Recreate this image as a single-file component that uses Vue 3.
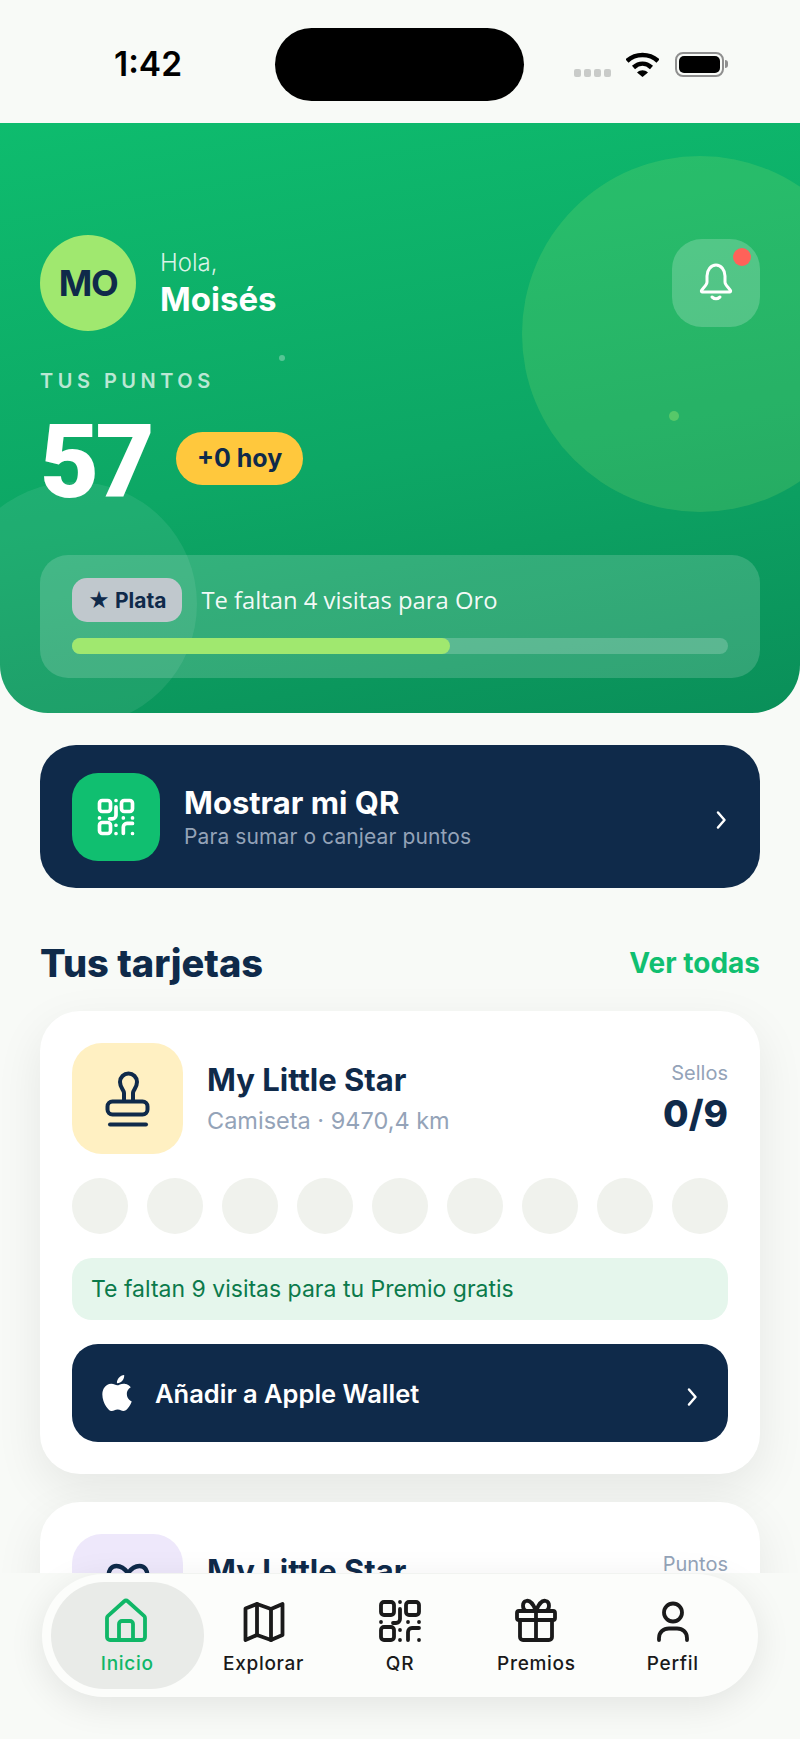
<script setup>
const stamps = Array.from({ length: 9 }, (_, i) => i);
</script>

<template>
  <div class="page">
    <div class="status">
      <span class="time">1:42</span>
      <div class="island"></div>
      <div class="status-right">
        <div class="signal"><i></i><i></i><i></i><i></i></div>
        <svg class="wifi" width="33" height="25" viewBox="0 0 33 25">
          <path d="M1 9C9.500 1 23.500 1 32 9" fill="none" stroke="#000" stroke-width="4.500" />
          <path d="M7.500 15.500C13 10.500 20 10.500 25.500 15.500" fill="none" stroke="#000" stroke-width="4.500" />
          <path d="M11 20.500C14.500 17.500 18.500 17.500 22 20.500L16.500 25Z" fill="#000" />
        </svg>
        <div class="battery"><div class="battery-fill"></div></div>
      </div>
    </div>

    <section class="hero">
      <div class="blob blob-big"></div>
      <div class="blob blob-left"></div>
      <div class="blob dot-a"></div>
      <div class="blob dot-b"></div>

      <div class="hero-head">
        <div class="avatar">MO</div>
        <div class="hello">
          <div class="hola">Hola,</div>
          <div class="name">Moisés</div>
        </div>
        <div class="bell">
          <svg width="44" height="44" viewBox="0 0 44 44" fill="none" stroke="#fff" stroke-width="3" stroke-linecap="round" stroke-linejoin="round">
            <path d="M13 15a9 11 0 0 1 18 0v6c0 3 4 6 5.500 8.500a1 1 0 0 1-1 1.500H8.500a1 1 0 0 1-1-1.500C9 27 13 24 13 21Z" />
            <path d="M18 36q4 3.500 8 0" />
          </svg>
          <span class="bell-dot"></span>
        </div>
      </div>

      <div class="points-label">TUS PUNTOS</div>
      <div class="points-row">
        <span class="points">57</span>
        <span class="today">+0 hoy</span>
      </div>

      <div class="tier">
        <div class="tier-top">
          <span class="tier-pill">★ Plata</span>
          <span class="tier-text">Te faltan 4 visitas para Oro</span>
        </div>
        <div class="bar"><div class="bar-fill" :style="{ width: '57.6%' }"></div></div>
      </div>
    </section>

    <div class="qr-btn">
      <div class="qr-box">
        <svg width="44" height="44" viewBox="0 0 24 24" fill="none" stroke="#fff" stroke-width="2" stroke-linecap="round" stroke-linejoin="round">
          <rect x="3" y="3" width="6" height="6" rx="1.500" />
          <rect x="15" y="3" width="6" height="6" rx="1.500" />
          <rect x="3" y="15" width="6" height="6" rx="1.500" />
          <path d="M12 3v.01M12 6.500v4.500a2 2 0 0 1-2 2H8.500M3 12.500h.01M16 12.500h.01M21 12.500h.01M12 16.500v.01M12 21v.01M16 21v-3.500a2 2 0 0 1 2-2h3M21 21v.01" />
        </svg>
      </div>
      <div class="qr-text">
        <div class="qr-title">Mostrar mi QR</div>
        <div class="qr-sub">Para sumar o canjear puntos</div>
      </div>
      <svg class="qr-chevron" width="12" height="20" viewBox="0 0 12 20" fill="none" stroke="#fff" stroke-width="2.500" stroke-linecap="round" stroke-linejoin="round">
        <path d="M3 2.500l6.500 7.500-6.500 7.500" />
      </svg>
    </div>

    <div class="section-head">
      <h2>Tus tarjetas</h2>
      <span class="see-all">Ver todas</span>
    </div>

    <div class="card">
      <div class="card-top">
        <div class="card-icon yellow">
          <svg width="60" height="60" viewBox="0 0 60 60" fill="none" stroke="#0f2a4a" stroke-width="4" stroke-linecap="round" stroke-linejoin="round">
            <path d="M26 32v-8c0-3-4-5-4-11a8.500 8.500 0 1 1 17 0c0 6-4 8-4 11v8" />
            <rect x="9.500" y="32.500" width="40" height="13" rx="5" />
            <path d="M12 55.500h36" />
          </svg>
        </div>
        <div class="card-info">
          <div class="card-name">My Little Star</div>
          <div class="card-sub">Camiseta · 9470,4 km</div>
        </div>
        <div class="card-count">
          <div class="count-label">Sellos</div>
          <div class="count-value">0/9</div>
        </div>
      </div>
      <div class="stamps">
        <span v-for="s in stamps" :key="s" class="stamp"></span>
      </div>
      <div class="note">Te faltan 9 visitas para tu Premio gratis</div>
      <div class="wallet">
        <svg width="36" height="36" viewBox="0 0 24 24" fill="#fff">
          <path d="M12.152 6.896c-.948 0-2.415-1.078-3.960-1.040-2.040.027-3.910 1.183-4.961 3.014-2.117 3.675-.546 9.103 1.519 12.090 1.013 1.454 2.208 3.090 3.792 3.039 1.520-.065 2.090-.987 3.935-.987 1.831 0 2.350.987 3.960.948 1.637-.026 2.676-1.480 3.676-2.948 1.156-1.688 1.636-3.325 1.662-3.415-.039-.013-3.182-1.221-3.220-4.857-.026-3.040 2.480-4.494 2.597-4.559-1.429-2.090-3.623-2.324-4.390-2.376-2-.156-3.675 1.090-4.610 1.090zM15.530 3.830c.843-1.012 1.400-2.427 1.245-3.830-1.207.052-2.662.805-3.532 1.818-.780.896-1.454 2.338-1.273 3.714 1.338.104 2.715-.688 3.559-1.701" />
        </svg>
        <span class="wallet-text">Añadir a Apple Wallet</span>
        <svg class="wallet-chevron" width="12" height="20" viewBox="0 0 12 20" fill="none" stroke="#fff" stroke-width="2.500" stroke-linecap="round" stroke-linejoin="round">
          <path d="M3 2.500l6.500 7.500-6.500 7.500" />
        </svg>
      </div>
    </div>

    <div class="card">
      <div class="card-top">
        <div class="card-icon purple">
          <svg width="60" height="60" viewBox="0 0 60 60" fill="none" stroke="#0f2a4a" stroke-width="4.500" stroke-linecap="round" stroke-linejoin="round">
            <path d="M30 13C27 9 23 6 18.500 6 13 6 10.500 11 10.500 16c0 8 7 12 19.500 2 12.500 10 19.500 6 19.500-2 0-5-2.500-10-8-10-4.500 0-8.500 3-11.500 7Z" />
          </svg>
        </div>
        <div class="card-info">
          <div class="card-name">My Little Star</div>
          <div class="card-sub">Camiseta · 9470,4 km</div>
        </div>
        <div class="card-count">
          <div class="count-label">Puntos</div>
          <div class="count-value">57</div>
        </div>
      </div>
    </div>

    <nav class="tabbar">
      <div class="tabs">
        <div class="tab active">
          <svg width="48" height="48" viewBox="0 0 48 48" fill="none" stroke="currentColor" stroke-width="3.800" stroke-linecap="round" stroke-linejoin="round">
            <path d="M4 21a3 3 0 0 1 1-2.200L21 4.500a3 3 0 0 1 4 0l16 14.300a3 3 0 0 1 1 2.200v19a3 3 0 0 1-3 3H7a3 3 0 0 1-3-3Z" />
            <path d="M16 43V27a3 3 0 0 1 3-3h8a3 3 0 0 1 3 3v16" />
          </svg>
          <span>Inicio</span>
        </div>
        <div class="tab">
          <svg width="48" height="48" viewBox="0 0 48 48" fill="none" stroke="currentColor" stroke-width="3.800" stroke-linecap="round" stroke-linejoin="round">
            <path d="M5.500 11.500 17 7l14 5 11.500-5v31L31 43l-14-5-11.500 5Z" />
            <path d="M17 7v31M31 12v31" />
          </svg>
          <span>Explorar</span>
        </div>
        <div class="tab">
          <svg width="48" height="48" viewBox="0 0 24 24" fill="none" stroke="currentColor" stroke-width="1.900" stroke-linecap="round" stroke-linejoin="round">
            <rect x="2.500" y="2.500" width="6.500" height="6.500" rx="1.500" />
            <rect x="15" y="2.500" width="6.500" height="6.500" rx="1.500" />
            <rect x="2.500" y="15" width="6.500" height="6.500" rx="1.500" />
            <path d="M12 2.500v.01M12 6v5a2 2 0 0 1-2 2H8.500M2.500 12.500h.01M16 12.500h.01M21.500 12.500h.01M12 16.500v.01M12 21.500v.01M16 21.500v-4a2 2 0 0 1 2-2h3.500M21.500 21.500v.01" />
          </svg>
          <span>QR</span>
        </div>
        <div class="tab">
          <svg width="48" height="48" viewBox="0 0 48 48" fill="none" stroke="currentColor" stroke-width="3.800" stroke-linecap="round" stroke-linejoin="round">
            <rect x="5" y="14" width="38" height="9" rx="2" />
            <path d="M8 23v17a3 3 0 0 0 3 3h26a3 3 0 0 0 3-3V23M24 14v29" />
            <path d="M24 14c-3-8-7-11-10-10-4 1-4 8 0 10M24 14c3-8 7-11 10-10 4 1 4 8 0 10" />
          </svg>
          <span>Premios</span>
        </div>
        <div class="tab">
          <svg width="48" height="48" viewBox="0 0 48 48" fill="none" stroke="currentColor" stroke-width="3.800" stroke-linecap="round" stroke-linejoin="round">
            <circle cx="24" cy="15.500" r="9" />
            <path d="M10 43v-2c0-6 4.500-9.500 10-9.500h8c5.500 0 10 3.500 10 9.500v2" />
          </svg>
          <span>Perfil</span>
        </div>
      </div>
    </nav>
  </div>
</template>

<style scoped>
.page {
  position: relative;
  width: 800px;
  height: 1739px;
  overflow: hidden;
  background: #f8faf7;
  font-family: Inter, "Liberation Sans", sans-serif;
  color: #0f2a4a;
}

.status {
  display: grid;
  grid-template-columns: 275px 249px 1fr;
  height: 123px;
  background: #f8faf7;
}
.time {
  padding-left: 114px;
  padding-top: 44px;
  font-size: 33.500px;
  line-height: 40px;
  font-weight: 600;
  color: #000;
}
.island {
  margin-top: 28px;
  height: 73px;
  border-radius: 37px;
  background: #000;
}
.status-right {
  display: flex;
  align-items: flex-end;
  height: 77px;
  padding-left: 50px;
}
.signal {
  display: flex;
  gap: 3px;
  margin-right: 15px;
}
.signal i {
  width: 7px;
  height: 8px;
  border-radius: 2px;
  background: #c9cbc9;
}
.battery {
  position: relative;
  width: 49px;
  height: 25px;
  margin-left: 16px;
  padding: 2px;
  box-sizing: border-box;
  border: 2px solid #8f8f8f;
  border-radius: 8px;
}
.battery::after {
  content: "";
  position: absolute;
  right: -6px;
  top: 6px;
  width: 3px;
  height: 8px;
  border-radius: 0 3px 3px 0;
  background: #8f8f8f;
}
.battery-fill {
  height: 100%;
  border-radius: 5px;
  background: #000;
}

.hero {
  position: relative;
  height: 590px;
  box-sizing: border-box;
  padding: 112px 40px 0;
  overflow: hidden;
  border-radius: 0 0 48px 48px;
  background: linear-gradient(170deg, #0ebc6e 0%, #0da765 55%, #0a8f59 100%);
}
.blob {
  position: absolute;
  border-radius: 50%;
  background: rgba(160, 232, 111, 0.18);
}
.blob-big {
  left: 522px;
  top: 33px;
  width: 356px;
  height: 356px;
}
.blob-left {
  left: -47px;
  top: 359px;
  width: 244px;
  height: 244px;
  background: rgba(255, 255, 255, 0.08);
}
.dot-a {
  left: 279px;
  top: 232px;
  width: 6px;
  height: 6px;
  background: rgba(255, 255, 255, 0.3);
}
.dot-b {
  left: 669px;
  top: 288px;
  width: 10px;
  height: 10px;
  background: rgba(160, 232, 111, 0.4);
}

.hero-head {
  position: relative;
  display: flex;
  align-items: center;
  height: 96px;
}
.avatar {
  display: flex;
  align-items: center;
  justify-content: center;
  width: 96px;
  height: 96px;
  border-radius: 50%;
  background: #a0e86f;
  font-size: 36px;
  font-weight: 700;
  letter-spacing: -1.500px;
  color: #0f2a4a;
}
.hello {
  margin-left: 24px;
  flex: 1;
}
.hola {
  font-size: 24px;
  line-height: 30px;
  font-weight: 300;
  color: rgba(255, 255, 255, 0.85);
}
.name {
  margin-top: 1px;
  font-size: 33px;
  line-height: 40px;
  font-weight: 700;
  color: #fff;
}
.bell {
  position: relative;
  display: flex;
  align-items: center;
  justify-content: center;
  width: 88px;
  height: 88px;
  border-radius: 30px;
  background: rgba(255, 255, 255, 0.2);
}
.bell-dot {
  position: absolute;
  right: 9px;
  top: 9px;
  width: 18px;
  height: 18px;
  border-radius: 50%;
  background: #ff6259;
}

.points-label {
  position: relative;
  margin-top: 38px;
  font-size: 20px;
  line-height: 24px;
  font-weight: 600;
  letter-spacing: 4.500px;
  color: rgba(255, 255, 255, 0.72);
}
.points-row {
  position: relative;
  display: flex;
  align-items: center;
  margin-top: 19px;
  height: 100px;
}
.points {
  flex: none;
  width: 115px;
  font-family: Roboto, Inter, sans-serif;
  font-size: 102px;
  line-height: 100px;
  font-weight: 900;
  letter-spacing: -3.500px;
  color: #fff;
}
.today {
  display: flex;
  align-items: center;
  height: 53px;
  margin-left: 21px;
  margin-bottom: 8px;
  padding: 0 21px;
  border-radius: 27px;
  background: #ffc83d;
  font-size: 25px;
  font-weight: 700;
  color: #0f2a4a;
}

.tier {
  position: relative;
  height: 123px;
  margin-top: 43px;
  box-sizing: border-box;
  padding: 23px 32px 0;
  border-radius: 28px;
  background: rgba(255, 255, 255, 0.16);
}
.tier-top {
  display: flex;
  align-items: center;
  height: 44px;
}
.tier-pill {
  display: flex;
  align-items: center;
  height: 44px;
  padding: 0 16px;
  border-radius: 15px;
  background: #c0c8cd;
  font-size: 21px;
  font-weight: 700;
  color: #0f2a4a;
}
.tier-text {
  margin-left: 19px;
  font-family: "Open Sans", sans-serif;
  font-size: 23.800px;
  color: rgba(255, 255, 255, 0.95);
}
.bar {
  height: 16px;
  margin-top: 16px;
  border-radius: 8px;
  background: rgba(255, 255, 255, 0.2);
}
.bar-fill {
  height: 100%;
  border-radius: 8px;
  background: #a0e86f;
}

.qr-btn {
  display: flex;
  align-items: center;
  height: 143px;
  margin: 32px 40px 0;
  box-sizing: border-box;
  padding: 0 33px 0 32px;
  border-radius: 36px;
  background: #0f2a4a;
}
.qr-box {
  display: flex;
  align-items: center;
  justify-content: center;
  width: 88px;
  height: 88px;
  border-radius: 26px;
  background: #10bf70;
}
.qr-text {
  flex: 1;
  margin-left: 24px;
}
.qr-title {
  font-size: 31px;
  line-height: 38px;
  font-weight: 700;
  color: #fff;
}
.qr-sub {
  margin-top: 2px;
  font-size: 21px;
  line-height: 26px;
  letter-spacing: 0.1px;
  color: #94a3b8;
}
.qr-chevron {
  margin-top: 6px;
}

.section-head {
  display: flex;
  align-items: center;
  justify-content: space-between;
  height: 48px;
  margin: 51px 40px 0;
}
.section-head h2 {
  margin: 0;
  font-size: 38px;
  font-weight: 800;
  color: #0f2a4a;
}
.see-all {
  font-size: 28px;
  font-weight: 700;
  color: #10bf70;
}

.card {
  margin: 24px 40px 0;
  box-sizing: border-box;
  padding: 32px;
  border-radius: 40px;
  background: #fff;
  box-shadow: 0 16px 48px rgba(0, 0, 0, 0.08);
}
.card + .card {
  margin-top: 28px;
}
.card-top {
  display: flex;
  align-items: center;
}
.card-icon {
  display: flex;
  align-items: center;
  justify-content: center;
  width: 111px;
  height: 111px;
  border-radius: 30px;
}
.yellow {
  background: #fff0c2;
}
.purple {
  background: #eee8fb;
}
.card-info {
  flex: 1;
  margin-left: 24px;
}
.card-name {
  font-size: 31px;
  line-height: 38px;
  font-weight: 700;
  color: #0f2a4a;
}
.card-sub {
  margin-top: 7px;
  font-size: 23.500px;
  line-height: 30px;
  color: #94a3b8;
}
.card-count {
  text-align: right;
  margin-top: -2px;
}
.count-label {
  font-size: 20px;
  line-height: 26px;
  color: #94a3b8;
}
.count-value {
  margin-top: 7px;
  font-size: 37px;
  line-height: 42px;
  font-weight: 800;
  color: #0f2a4a;
}
.stamps {
  display: flex;
  justify-content: space-between;
  margin-top: 24px;
}
.stamp {
  width: 56px;
  height: 56px;
  border-radius: 50%;
  background: #f0f2ed;
}
.note {
  display: flex;
  align-items: center;
  height: 62px;
  margin-top: 24px;
  padding-left: 19px;
  border-radius: 20px;
  background: #e5f6ec;
  font-size: 23px;
  color: #0b7a4b;
}
.wallet {
  display: flex;
  align-items: center;
  height: 98px;
  margin-top: 24px;
  box-sizing: border-box;
  padding: 0 30px 0 27px;
  border-radius: 26px;
  background: #0f2a4a;
}
.wallet-text {
  flex: 1;
  margin-left: 20px;
  font-size: 25.500px;
  font-weight: 600;
  color: #fff;
}
.wallet-chevron {
  margin-top: 8px;
}

.tabbar {
  position: absolute;
  left: 0;
  right: 0;
  top: 1573px;
  bottom: 0;
  background: #f8faf7;
}
.tabs {
  display: grid;
  grid-template-columns: repeat(5, 1fr);
  height: 123px;
  margin: 1px 42px 0;
  box-sizing: border-box;
  padding: 8px 17px;
  border-radius: 62px;
  background: #fcfdfb;
  box-shadow: 0 8px 36px rgba(0, 0, 0, 0.09);
}
.tab {
  display: flex;
  flex-direction: column;
  align-items: center;
  padding-top: 15px;
  color: #1a1a1a;
  font-size: 19px;
  font-weight: 500;
  letter-spacing: 0.700px;
  line-height: 24px;
}
.tab span {
  margin-top: 7px;
}
.tab.active {
  margin: 0 -8.5px;
  border-radius: 54px;
  background: #e9ebe8;
  color: #10b767;
}
</style>

<style>
html,
body {
  margin: 0;
  background: #f8faf7;
}
</style>
